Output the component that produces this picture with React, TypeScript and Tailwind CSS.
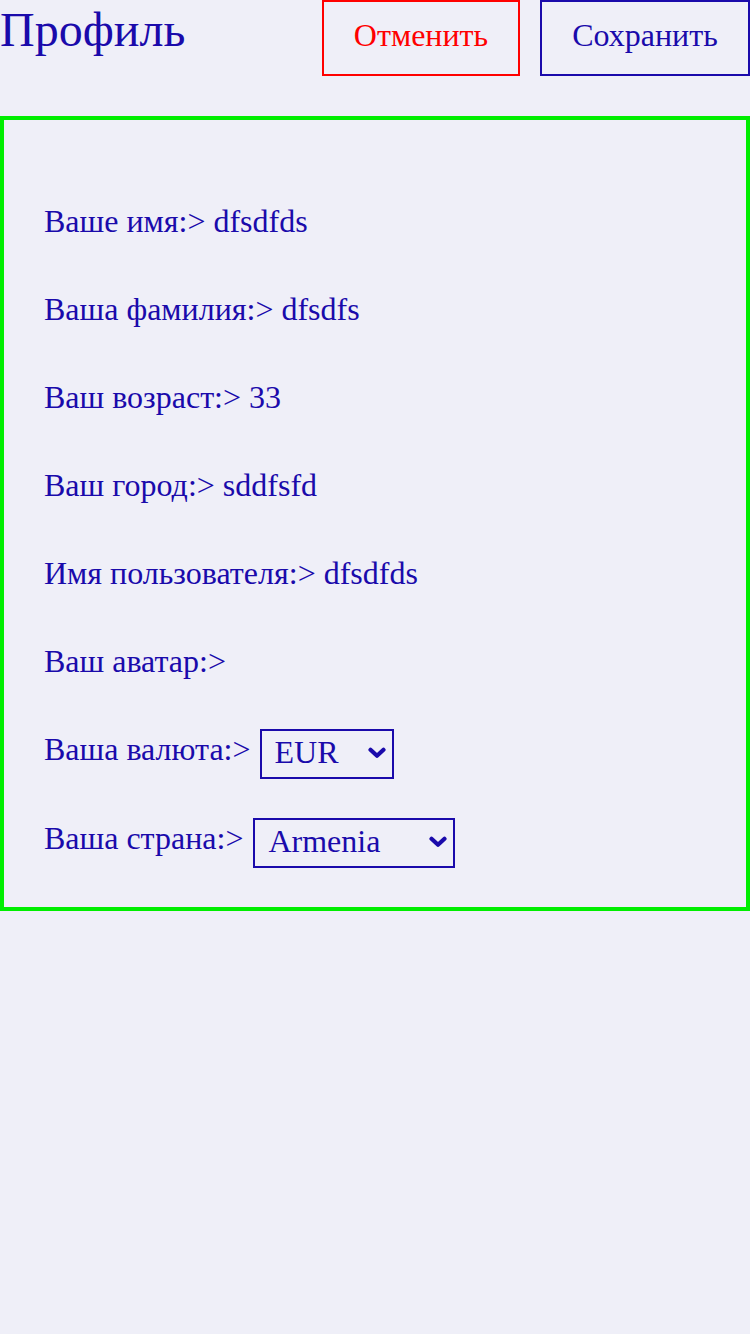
import React, { useState } from "react";

const ink = "text-[#1a0aab]";

function Chevron() {
  return (
    <svg
      width="18"
      height="12"
      viewBox="0 0 18 12"
      className="pointer-events-none absolute right-[8px] top-[19px]"
    >
      <path d="M2.5 2.8 L9 8.8 L15.5 2.8" fill="none" stroke="#1a0aab" strokeWidth="4.2" strokeLinecap="round" strokeLinejoin="round" />
    </svg>
  );
}

function Picker({ value, options, width, onChange }: { value: string; options: string[]; width: string; onChange: (v: string) => void }) {
  return (
    <div className={`relative ${width} h-[50px] mt-[8px]`}>
      <select
        value={value}
        onChange={(e) => onChange(e.target.value)}
        className={`appearance-none w-full h-full bg-transparent border-2 border-[#1a0aab] rounded-none pl-[13px] pb-[4px] text-[32px] leading-[40px] ${ink} outline-none`}
      >
        {options.map((o) => (
          <option key={o} value={o}>
            {o}
          </option>
        ))}
      </select>
      <Chevron />
    </div>
  );
}

export default function App() {
  const [currency, setCurrency] = useState("EUR");
  const [country, setCountry] = useState("Armenia");

  const fields = [
    ["Ваше имя", "dfsdfds"],
    ["Ваша фамилия", "dfsdfs"],
    ["Ваш возраст", "33"],
    ["Ваш город", "sddfsfd"],
    ["Имя пользователя", "dfsdfds"],
    ["Ваш аватар", ""],
  ];

  return (
    <div className={`min-h-[1334px] w-[750px] bg-[#efeff8] ${ink} font-['Liberation_Serif',serif]`}>
      {/* header */}
      <div className="flex items-start h-[76px]">
        <h1 className="text-[48px] leading-[60px] flex-1">Профиль</h1>
        <button className="w-[198px] h-[76px] pb-[6px] border-2 border-[#ff0000] text-[#ff0000] text-[32px]">
          Отменить
        </button>
        <button className="ml-[20px] w-[210px] h-[76px] pb-[6px] border-2 border-[#1a0aab] text-[32px]">
          Сохранить
        </button>
      </div>

      <div className="mt-[40px] border-4 border-[#00ee00] pt-[57px] pb-[24px] pl-[40px]">
        {fields.map(([label, val]) => (
          <div key={label} className="h-[88px] flex items-center text-[32px]">
            {label}:&gt; {val}
          </div>
        ))}
        <div className="h-[88px] flex items-center gap-[9px] text-[32px]">
          <span>Ваша валюта:&gt;</span>
          <Picker value={currency} options={["EUR", "USD", "RUB"]} width="w-[134px]" onChange={setCurrency} />
        </div>
        <div className="h-[90px] flex items-center gap-[10px] text-[32px]">
          <span>Ваша страна:&gt;</span>
          <Picker value={country} options={["Armenia", "Russia", "Georgia"]} width="w-[202px]" onChange={setCountry} />
        </div>
      </div>
    </div>
  );
}
